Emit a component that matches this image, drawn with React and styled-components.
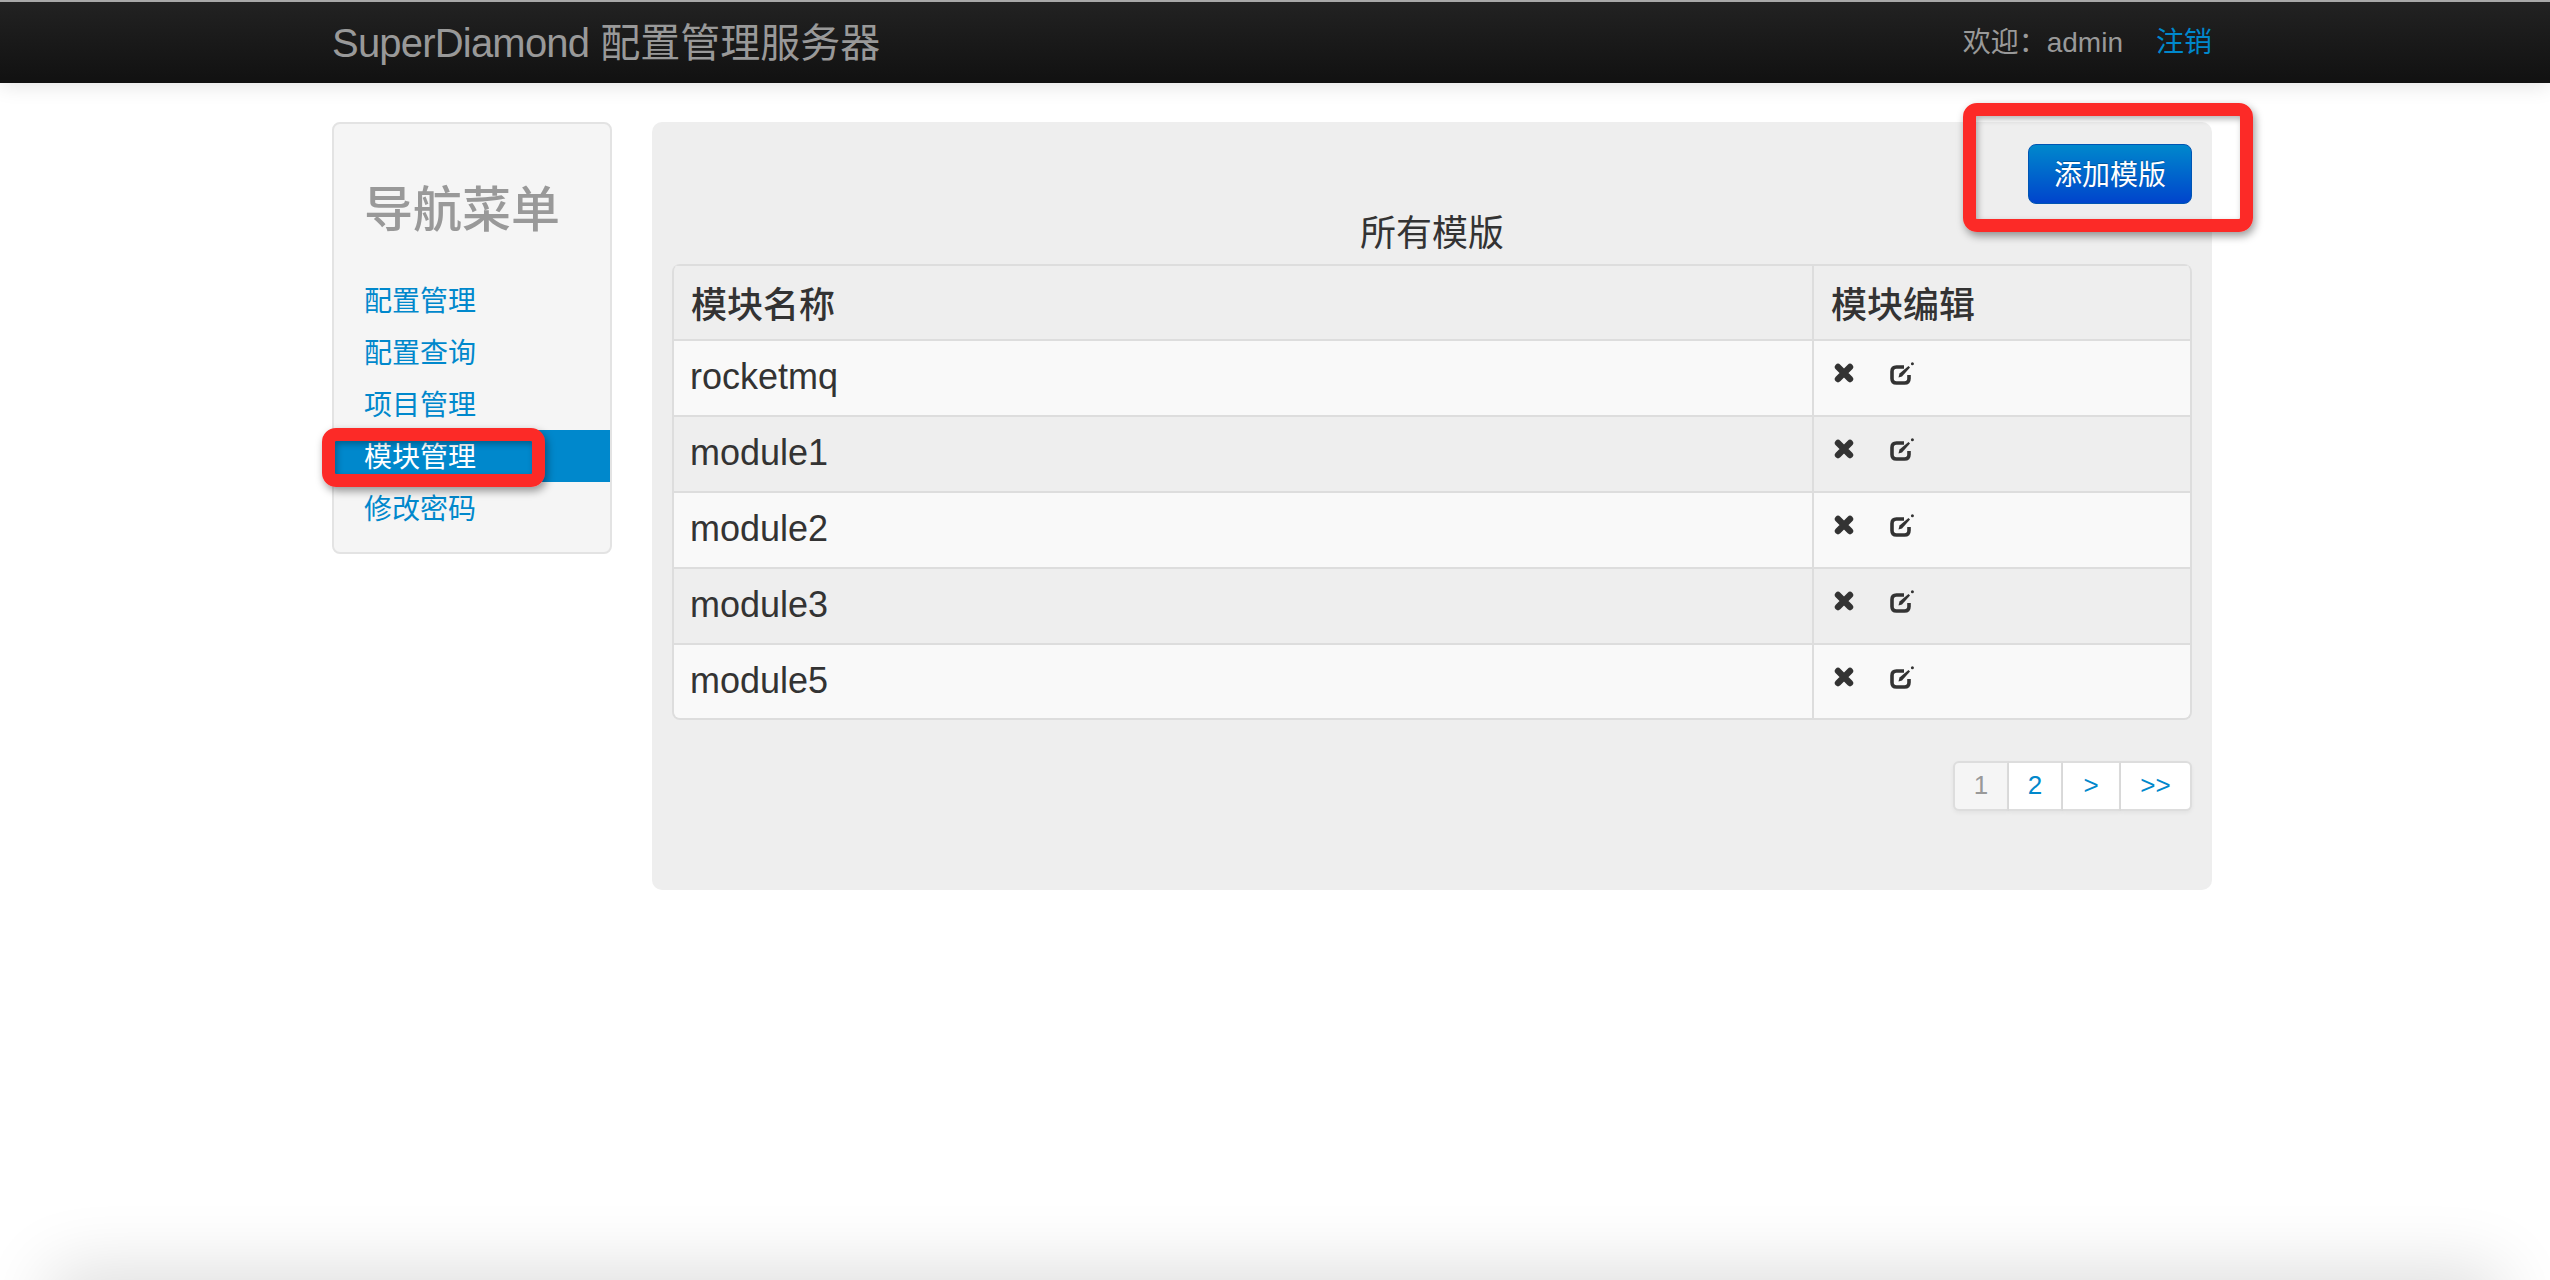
import React from "react"
import styled, { createGlobalStyle } from "styled-components"

const FONT = `"Liberation Sans", "Noto Sans CJK SC", sans-serif`

const GlobalStyle = createGlobalStyle`
  html, body {
    margin: 0;
    height: 100%;
    overflow: hidden;
    background: #fff;
    font-family: ${FONT};
    color: #333;
  }
`

const navLinks = ["配置管理", "配置查询", "项目管理", "模块管理", "修改密码"]
const modules = ["rocketmq", "module1", "module2", "module3", "module5"]
const pages = [
  { label: "1", disabled: true, width: 56 },
  { label: "2", width: 54 },
  { label: ">", width: 58 },
  { label: ">>", width: 71 },
]

const RemoveIcon = () => (
  <IconSvg width="20" height="20" viewBox="0 0 20 20">
    <path d="M4 4 L16 16 M16 4 L4 16" stroke="#333" strokeWidth="6.4" strokeLinecap="round" />
  </IconSvg>
)

const EditIcon = () => (
  <IconSvg width="25" height="24" viewBox="0 0 25 24">
    <path
      d="M14 6 H6.5 Q2 6 2 10.5 V17.5 Q2 22 6.5 22 H14.5 Q19 22 19 17.5 V14"
      fill="none"
      stroke="#333"
      strokeWidth="3.6"
    />
    <path d="M8.5 16.5 L9.5 12.5 L18.5 5 L20 6.5 L12 15.5 Z" fill="#333" />
    <circle cx="22.4" cy="2.8" r="1.5" fill="#333" />
  </IconSvg>
)

const App = () => (
  <Page>
    <GlobalStyle />
    <Navbar>
      <NavInner>
        <Brand>
          <BrandLatin>SuperDiamond</BrandLatin> 配置管理服务器
        </Brand>
        <UserBox>
          <span>欢迎：admin</span>
          <Logout href="#">注销</Logout>
        </UserBox>
      </NavInner>
    </Navbar>

    <Content>
      <Sidebar>
        <SideHeading>导航菜单</SideHeading>
        {navLinks.map((link, i) => (
          <SideLink key={link} href="#" $active={i === 3}>
            {link}
          </SideLink>
        ))}
      </Sidebar>

      <Panel>
        <PanelActions>
          <PrimaryButton>添加模版</PrimaryButton>
        </PanelActions>
        <Caption>所有模版</Caption>
        <ModuleTable>
          <colgroup>
            <col />
            <col style={{ width: 378 }} />
          </colgroup>
          <thead>
            <tr>
              <HeadCell>模块名称</HeadCell>
              <HeadCell>模块编辑</HeadCell>
            </tr>
          </thead>
          <tbody>
            {modules.map((name, i) => (
              <tr key={name}>
                <NameCell $odd={i % 2 === 0}>{name}</NameCell>
                <ActionCell $odd={i % 2 === 0}>
                  <ActionRow>
                    <RemoveIcon />
                    <EditIcon />
                  </ActionRow>
                </ActionCell>
              </tr>
            ))}
          </tbody>
        </ModuleTable>
        <Pagination>
          {pages.map(page => (
            <PageLink key={page.label} $disabled={page.disabled} $width={page.width}>
              {page.label}
            </PageLink>
          ))}
        </Pagination>
      </Panel>
    </Content>

    <Callout $variant="nav" />
    <Callout $variant="button" />
    <WindowShadow />
  </Page>
)

const Page = styled.div`
  position: relative;
  height: 1280px;
  overflow: hidden;
`

const Navbar = styled.header`
  height: 81px;
  border-top: 2px solid #a8a8a8;
  background: linear-gradient(to bottom, #222222, #111111);
  box-shadow: 0 2px 20px rgba(0, 0, 0, 0.12);
`

const NavInner = styled.div`
  box-sizing: border-box;
  width: 1880px;
  margin-left: 332px;
  height: 100%;
  padding-bottom: 5px;
  display: flex;
  align-items: center;
  justify-content: space-between;
`

const Brand = styled.div`
  font-size: 40px;
  color: #999;
  white-space: nowrap;
`

const BrandLatin = styled.span`
  letter-spacing: -0.8px;
`

const UserBox = styled.div`
  display: flex;
  gap: 33px;
  font-size: 28px;
  color: #999;
`

const Logout = styled.a`
  color: #0088cc;
  text-decoration: none;
`

const Content = styled.main`
  width: 1880px;
  margin-left: 332px;
  padding-top: 39px;
  display: flex;
  align-items: flex-start;
  gap: 40px;
`

const Sidebar = styled.nav`
  box-sizing: border-box;
  width: 280px;
  height: 432px;
  border: 2px solid #e3e3e3;
  border-radius: 8px;
  background: #f5f5f5;
`

const SideHeading = styled.h2`
  box-sizing: border-box;
  margin: 0;
  height: 150px;
  line-height: 104px;
  padding: 34px 0 0 30px;
  font-size: 49px;
  font-weight: 500;
  color: #999;
`

const SideLink = styled.a`
  display: block;
  height: 52px;
  line-height: 55px;
  padding-left: 30px;
  font-size: 28px;
  text-decoration: none;
  color: ${p => (p.$active ? "#fff" : "#0088cc")};
  background: ${p => (p.$active ? "#0088cc" : "transparent")};
`

const Panel = styled.section`
  box-sizing: border-box;
  width: 1560px;
  height: 768px;
  padding: 22px 20px 0 20px;
  background: #eeeeee;
  border-radius: 10px;
`

const PanelActions = styled.div`
  display: flex;
  justify-content: flex-end;
`

const PrimaryButton = styled.button`
  box-sizing: border-box;
  width: 164px;
  height: 60px;
  padding: 0 0 2px;
  border: 1px solid #0055b3;
  border-radius: 8px;
  background: linear-gradient(to bottom, #0088cc, #0044cc);
  color: #fff;
  font-family: ${FONT};
  font-size: 28px;
  text-shadow: 0 -1px 0 rgba(0, 0, 0, 0.25);
`

const Caption = styled.div`
  height: 60px;
  line-height: 60px;
  text-align: center;
  font-size: 36px;
  color: #333;
`

const ModuleTable = styled.table`
  width: 100%;
  table-layout: fixed;
  border-collapse: separate;
  border-spacing: 0;
  border: 2px solid #dddddd;
  border-top-width: 0;
  border-radius: 8px;
  overflow: hidden;
  box-shadow: inset 0 2px 0 #dddddd;
`

const HeadCell = styled.th`
  box-sizing: border-box;
  height: 75px;
  padding: 0 16px 2px 17px;
  text-align: left;
  font-size: 36px;
  font-weight: 500;
  background: #eeeeee;
  border-top: 2px solid #dddddd;
  & + & {
    border-left: 2px solid #dddddd;
  }
`

const NameCell = styled.td`
  box-sizing: border-box;
  height: 75.9px;
  padding: 0 16px 1px;
  font-size: 36px;
  color: #333;
  border-top: 2px solid #dddddd;
  background: ${p => (p.$odd ? "#f9f9f9" : "#eeeeee")};
`

const ActionCell = styled(NameCell)`
  border-left: 2px solid #dddddd;
  padding: 20px 0 0 20px;
  vertical-align: top;
`

const ActionRow = styled.div`
  display: flex;
  align-items: center;
  gap: 36px;
`

const IconSvg = styled.svg`
  display: block;
  flex: none;
`

const Pagination = styled.div`
  display: flex;
  justify-content: flex-end;
  margin-top: 41px;
`

const PageLink = styled.a`
  box-sizing: border-box;
  width: ${p => p.$width}px;
  height: 50px;
  line-height: 44px;
  text-align: center;
  font-size: 26px;
  background: ${p => (p.$disabled ? "#f5f5f5" : "#fff")};
  color: ${p => (p.$disabled ? "#999" : "#0088cc")};
  border: 2px solid #dddddd;
  border-left-width: 0;
  box-shadow: 0 2px 4px rgba(0, 0, 0, 0.05);
  &:first-child {
    border-left-width: 2px;
    border-radius: 6px 0 0 6px;
  }
  &:last-child {
    border-radius: 0 6px 6px 0;
  }
`

// red annotation boxes drawn over the screenshot
const Callout = styled.div`
  position: absolute;
  box-sizing: border-box;
  border: 13px solid #fc2a27;
  border-radius: 14px;
  box-shadow: 2px 4px 8px rgba(0, 0, 0, 0.4), inset 2px 3px 6px rgba(0, 0, 0, 0.3);
  ${p =>
    p.$variant === "nav"
      ? "left: 322px; top: 428px; width: 223px; height: 59px;"
      : "left: 1963px; top: 103px; width: 290px; height: 129px;"}
`

// shadow of the browser window at the bottom edge of the capture
const WindowShadow = styled.div`
  position: absolute;
  left: 70px;
  right: 70px;
  top: 1290px;
  height: 40px;
  box-shadow: 0 0 70px 20px rgba(0, 0, 0, 0.14);
`

export default App
